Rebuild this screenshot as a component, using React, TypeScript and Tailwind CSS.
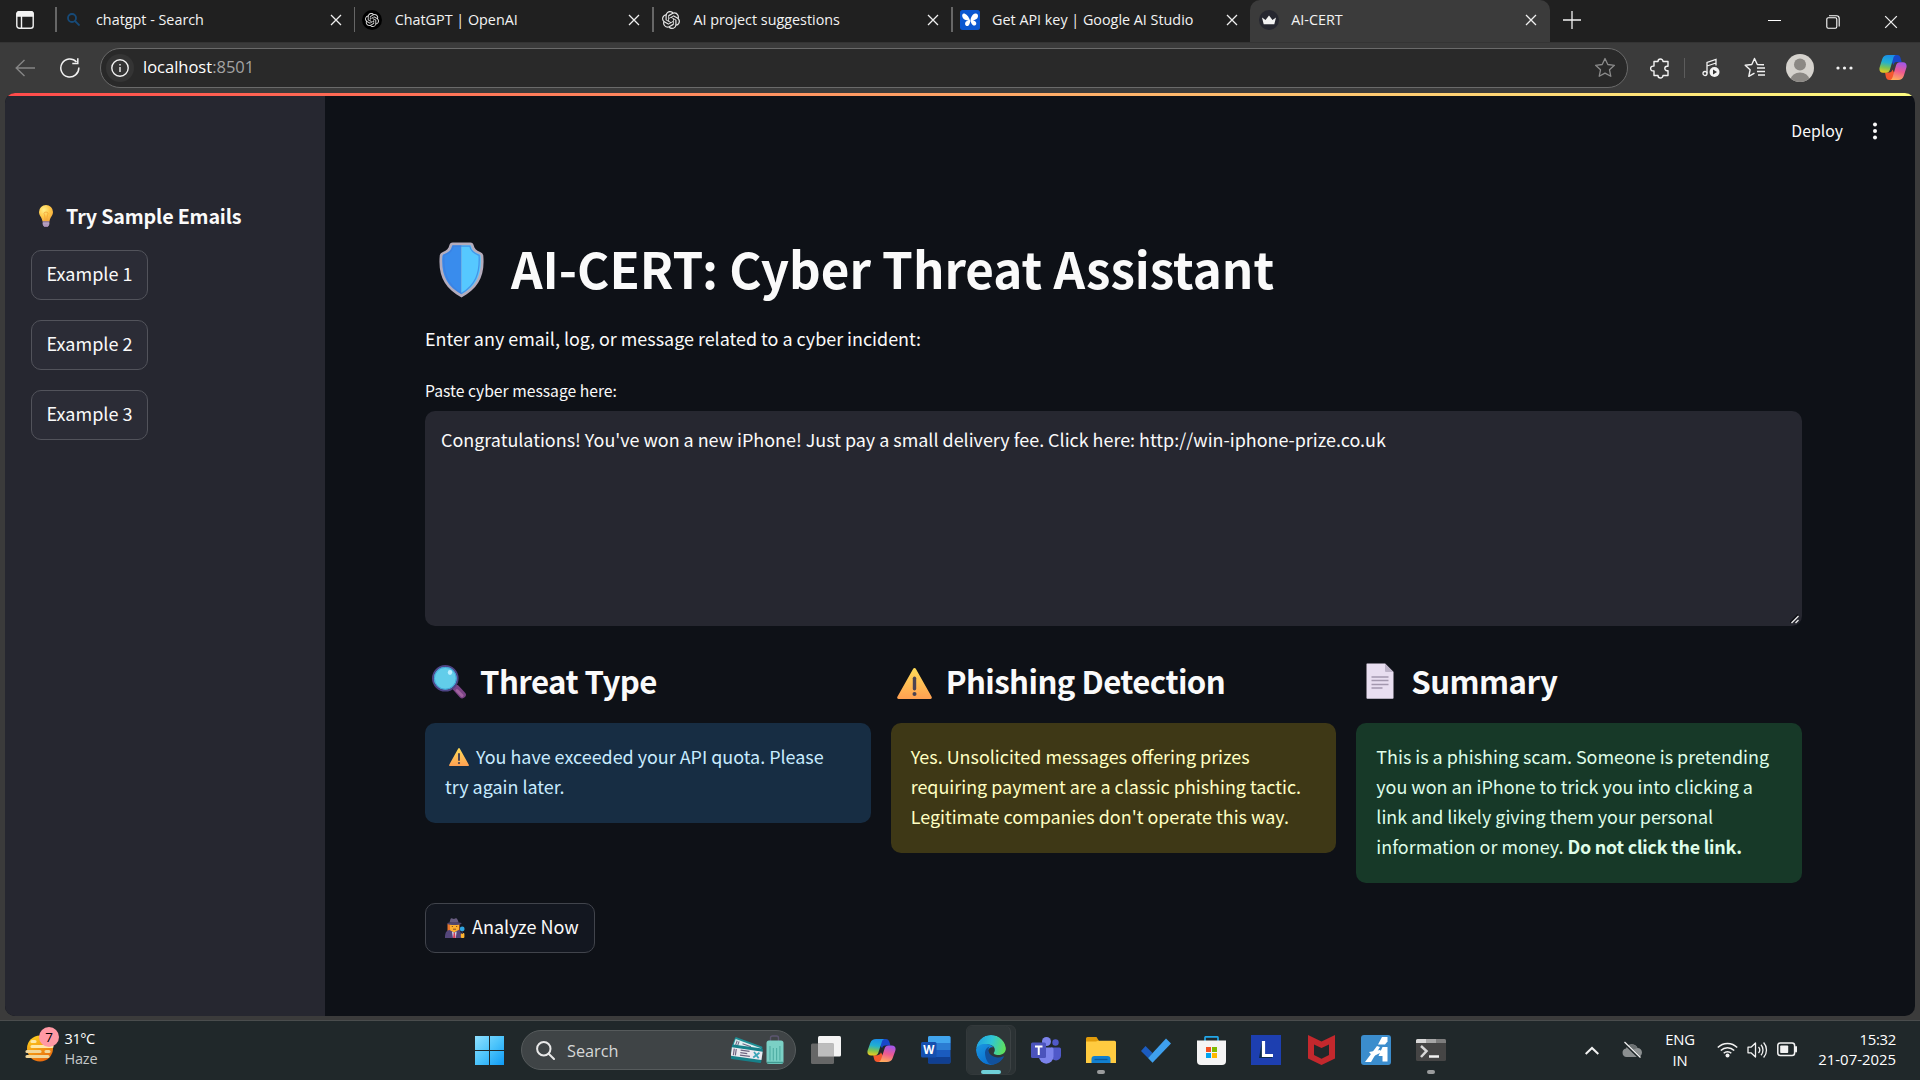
import React, { ReactNode } from "react";
import { SiOpenai } from "react-icons/si";

/* ---------- small glyphs ---------- */

const CloseX = ({ s = 12, w = 1.3 }: { s?: number; w?: number }) => (
  <svg width={s} height={s} viewBox="0 0 12 12" stroke="#f0f0f0" strokeWidth={w} fill="none">
    <path d="M1 1 11 11M11 1 1 11" />
  </svg>
);

const Copilot = ({ w, h, id }: { w: number; h: number; id: string }) => (
  <svg width={w} height={h} viewBox="0 0 30 27" preserveAspectRatio="none">
    <defs>
      <linearGradient id={id + "a"} x1="0.4" y1="0" x2="0.25" y2="1">
        <stop offset="0" stopColor="#1a8fe8" />
        <stop offset="0.4" stopColor="#22b0d0" />
        <stop offset="0.7" stopColor="#7cc353" />
        <stop offset="1" stopColor="#f2cb1d" />
      </linearGradient>
      <linearGradient id={id + "b"} x1="0.6" y1="0" x2="0.35" y2="1">
        <stop offset="0" stopColor="#a257e8" />
        <stop offset="0.5" stopColor="#ee5a90" />
        <stop offset="1" stopColor="#ffad5c" />
      </linearGradient>
    </defs>
    <path d="M13 1h6.5c2 0 3 1.2 3.6 3l1.2 4h-5.5c-2 0-2.6 1-3.2 3L13 7Z" fill="#1847c8" />
    <path d="M17 26h-6c-2 0-3-1.200-3.600-3l-1-4.500h4.500c2 0 3-1 3.500-3l2.800 5Z" fill="#f4582e" />
    <path d="M9.500 1H18c-1.600.5-2.200 1.600-2.700 3.200l-3.600 11.600c-.7 2-2 3-4 3H4.300C1.200 18.800-.2 16.500.7 13.200L3.500 5C4.500 2.200 6.300 1 9.500 1Z" fill={`url(#${id}a)`} />
    <path d="M20.500 26H12c1.600-.5 2.200-1.600 2.700-3.200l3.600-11.600c.7-2 2-3 4-3h3.400c3.100 0 4.500 2.300 3.600 5.600L26.500 22c-1 2.800-2.800 4-6 4Z" fill={`url(#${id}b)`} />
  </svg>
);

/* ---------- emoji drawings ---------- */

const Warning = ({ w, h, id }: { w: number; h: number; id: string }) => (
  <svg width={w} height={h} viewBox="0 0 35 31" preserveAspectRatio="none">
    <defs>
      <linearGradient id={id} x1="0" y1="0" x2="0" y2="1">
        <stop offset="0" stopColor="#ffdc58" />
        <stop offset="1" stopColor="#ffa052" />
      </linearGradient>
    </defs>
    <path d="M16.200.8a1.500 1.500 0 0 1 2.600 0L34.600 28.700A1.500 1.500 0 0 1 33.400 31H1.600A1.500 1.500 0 0 1 .4 28.700Z" fill={`url(#${id})`} />
    <rect x="15.800" y="8.500" width="3.400" height="14" rx="1.700" fill="#4b4352" />
    <circle cx="17.500" cy="26" r="2" fill="#4b4352" />
  </svg>
);

const Bulb = () => (
  <svg width="14" height="22" viewBox="0 0 14 22">
    <defs>
      <radialGradient id="bulb" cx="0.35" cy="0.3" r="0.8">
        <stop offset="0" stopColor="#fff08a" />
        <stop offset="0.5" stopColor="#ffc94a" />
        <stop offset="1" stopColor="#f3a63c" />
      </radialGradient>
    </defs>
    <path d="M7 0a7 7 0 0 1 7 7c0 4-3 5-3.500 9.500h-7C3 12 0 11 0 7a7 7 0 0 1 7-7Z" fill="url(#bulb)" />
    <path d="M5 8.200c0-1.500 4-1.500 4 0C9 9.600 7.900 10 7.900 15.500M5 8.200C5 9.600 6.100 10 6.100 15.500" stroke="#f19b33" strokeWidth=".7" fill="none" />
    <path d="M3.700 16.300h6.600v3.400L8.800 22H5.200l-1.500-2.300Z" fill="#9b82a8" />
    <path d="M3.700 18.200h6.600M4 20h6" stroke="#cdbad6" strokeWidth=".8" />
  </svg>
);

const Shield = () => (
  <svg width="46" height="56" viewBox="0 0 47 56">
    <path d="M14 0h18c2 0 3 1 3.500 3 .6 3 2.500 5 6.500 6.500 2 .8 3.300 2 3.300 4.500C47 34 40 47 23 56 6 47-1 34 .7 14c0-2.500 1.300-3.700 3.300-4.500C8 8 9.900 6 10.500 3 11 1 12 0 14 0Z" fill="#b4acbc" />
    <path d="M14.500 2.700H23v50C8 44.500 2.200 33 3.400 14.500c0-1.600.8-2.200 2.200-2.800 4.400-1.800 6.700-4 7.500-7.600.2-1 .6-1.400 1.400-1.400Z" fill="#398ced" />
    <path d="M31.500 2.700H23v50C38 44.500 43.800 33 42.600 14.500c0-1.600-.8-2.200-2.200-2.800-4.400-1.800-6.700-4-7.500-7.600-.2-1-.6-1.400-1.400-1.400Z" fill="#56c8ff" />
    <path d="M31.500 3.500h-17c-.5 4-3 7-9.500 9.500C4 32 9 43.500 23 52c14-8.500 19-20 18-39-6.500-2.500-9-5.500-9.500-9.500Z" fill="none" stroke="#3d7ede" strokeWidth="1.300" opacity=".7" />
  </svg>
);

const Magnifier = () => (
  <svg width="34" height="34" viewBox="0 0 34 34">
    <path d="m24.500 23.500 5.800 6.300" stroke="#7b4386" strokeWidth="7" strokeLinecap="round" />
    <path d="m25 25.500 5 5" stroke="#a0629f" strokeWidth="3" strokeLinecap="round" />
    <circle cx="13.300" cy="13.300" r="12.300" fill="#62cdea" stroke="#4d4586" strokeWidth="2" />
    <circle cx="13.300" cy="13.300" r="10.900" fill="none" stroke="#3fa6d6" strokeWidth="1" />
    <ellipse cx="18" cy="7.500" rx="2.200" ry="2.400" fill="#bdefff" />
  </svg>
);

const Page = () => (
  <svg width="28" height="36" viewBox="0 0 28 36">
    <path d="M1 .5h18L27.500 9v26a.8.8 0 0 1-.8.8H1.300a.8.800 0 0 1-.8-.8V1A.5.500 0 0 1 1 .5Z" fill="#e8def0" />
    <path d="M19 .5 27.500 9H20a1 1 0 0 1-1-1Z" fill="#bdb3c8" />
    <path d="M5.500 14h17M5.500 17.500h17M5.500 21.500h17M5.500 25h11" stroke="#a398ae" strokeWidth="1.300" />
  </svg>
);

const Detective = () => (
  <svg width="20" height="20" viewBox="0 0 20 20">
    <path d="M2.500 6h12v7a5 5 0 0 1-12 0Z" fill="#e8772e" />
    <path d="M5 6h9v4.500a4.500 4.500 0 0 1-9 0Z" fill="#ffb02e" />
    <path d="M0 20c0-5 1-7.500 4.500-8l4.500 2.500 4.500-2.500c2.500.5 2.500 3 2.500 8Z" fill="#54467a" />
    <path d="m7 13.500 2.300 1.500 2.300-1.500-.8 6.500H8Z" fill="#e6deee" />
    <path d="m8.600 15 1.400 0 .6 5H8Z" fill="#d23c5c" />
    <path d="M4.500 4.500 5.500 1c.2-.8 1-.9 1.700-.6L9 .9l1.600-.6c.7-.3 1.300 0 1.600.7l1.500 3.500Z" fill="#675c80" />
    <path d="M2 5.600c2-2 12.500-2 14.800 0-2 2-12.800 2-14.800 0Z" fill="#51466b" />
    <circle cx="17.200" cy="11" r="2.400" fill="#30a5e0" />
    <rect x="15.800" y="15" width="3.600" height="5" rx="1" fill="#ffb52e" />
    <path d="M17.200 13.500V16" stroke="#3b3350" strokeWidth="1.400" />
    <path d="M6.800 8.500h1.200M11 8.500h1.200M8 11.200h3" stroke="#6a3b20" strokeWidth=".8" />
  </svg>
);

/* ---------- browser chrome ---------- */

const Tab = ({ icon, title, active }: { icon: ReactNode; title: string; active?: boolean }) => (
  <div
    className={
      active
        ? "flex h-[44px] w-[300px] items-center rounded-t-[10px] bg-[#3b3b3b] pb-[5px] pr-[13px]"
        : "flex h-[41px] w-[298.700px] items-center pb-[2px] pr-[12px]"
    }
  >
    {!active && <div className="h-[25px] w-[1.500px] bg-[#666]" />}
    <div className={active ? "ml-[8px] flex w-[22px] justify-center" : "ml-[6px] flex w-[22px] justify-center"}>{icon}</div>
    <div className="ml-[11.500px] flex-1 whitespace-nowrap text-[14.350px] leading-[20px] text-[#f3f3f3]">{title}</div>
    <CloseX />
  </div>
);

const TabBar = () => (
  <div className="flex h-[42px] shrink-0 items-start bg-[#202020]">
    <div className="flex h-[40px] w-[55px] items-center pl-[16px]">
      <svg width="18" height="18" viewBox="0 0 18 18" fill="none" stroke="#f2f2f2" strokeWidth="1.400">
        <rect x=".8" y=".8" width="16.400" height="16.400" rx="2.500" />
        <path d="M1 2.200A2 2 0 0 1 3 .8h12a2 2 0 0 1 2 1.400V5H1Z" fill="#f2f2f2" />
        <path d="M5.500 5v12" />
      </svg>
    </div>
    <Tab
      title="chatgpt - Search"
      icon={
        <svg width="13" height="13" viewBox="0 0 13 13" fill="none" stroke="#174a78" strokeWidth="1.800">
          <circle cx="5" cy="5" r="4" />
          <path d="m8 8 4.500 4.500" />
        </svg>
      }
    />
    <Tab
      title="ChatGPT | OpenAI"
      icon={
        <div className="flex size-[20px] items-center justify-center rounded-full bg-black text-[#e0e0e0]">
          <SiOpenai size={14} />
        </div>
      }
    />
    <Tab title="AI project suggestions" icon={<SiOpenai size={18} color="#e6e6e6" />} />
    <Tab
      title="Get API key | Google AI Studio"
      icon={
        <svg width="20" height="20" viewBox="0 0 20 20">
          <rect width="20" height="20" rx="2.500" fill="#0b57d0" />
          <path d="M10.300 11C9.300 8 7.500 4.500 4.500 3.500 2.500 3 1.600 5 2.500 7.200c.9 2.200 3.500 3.200 6 3.300-2.500.3-3.700 2-3.400 3.700.3 1.700 2.300 2.400 3.500 1.200C9.800 14.300 10 12.500 10.300 11Z" fill="#fff" />
          <path d="M10.500 10.500c.3-3.500 2-6.500 4.800-7 2-.3 3.200 1.500 2.600 3.500-.7 2.200-2.700 3-5 3.300 2 .6 3.600 1.800 3.400 3.500-.2 1.700-2.200 2.400-3.600 1.200-1.400-1.200-2-3-2.200-4.500Z" fill="#fff" />
        </svg>
      }
    />
    <Tab
      active
      title="AI-CERT"
      icon={
        <svg width="20" height="20" viewBox="0 0 20 20">
          <circle cx="10" cy="10" r="10" fill="#262730" />
          <path d="M3 7.500 6.500 10 10 5.500l3.500 4.500L17 7.500 15.300 14.200H4.700Z" fill="#f2f2f2" />
        </svg>
      }
    />
    <div className="flex h-[40px] flex-1 items-center justify-between pl-[13px] pr-[22px]">
      <svg width="18" height="18" viewBox="0 0 18 18" stroke="#f2f2f2" strokeWidth="1.300">
        <path d="M9 0v18M0 9h18" />
      </svg>
      <div className="flex items-center">
        <div className="mr-[45px] h-px w-[13px] bg-white" />
        <svg className="mr-[44px] mt-[3px]" width="14" height="14" viewBox="0 0 14 14" fill="none" stroke="#fff" strokeWidth="1.100">
          <rect x=".8" y="2.800" width="10" height="10.400" rx="1.500" />
          <path d="M3 .8h7.500A2.700 2.700 0 0 1 13.200 3.500v8" />
        </svg>
        <div className="mt-[3px]"><CloseX s={14} w={1.1} /></div>
      </div>
    </div>
  </div>
);

const Toolbar = () => (
  <div className="flex h-[51px] shrink-0 items-center border-t border-[#343434] bg-[#3b3b3b] pb-[1px] pl-[15px] pr-[13px]">
    <svg width="20" height="18" viewBox="0 0 20 18" fill="none" stroke="#858585" strokeWidth="1.400">
      <path d="M9.500 1 1.200 9l8.300 8M1.200 9H20" />
    </svg>
    <svg className="ml-[24px]" width="22" height="22" viewBox="0 0 22 22" fill="none" stroke="#f2f2f2" strokeWidth="1.500">
      <path d="M19.800 10.500A9 9 0 1 1 17.500 5M13.300 6.500h5.500V1.200" />
    </svg>
    <div className="ml-[19px] flex h-[40px] w-[1528px] items-center rounded-full border border-[#6a6a6a] bg-[#292929] pl-[5px] pr-[11px]">
      <div className="flex size-[28px] items-center justify-center rounded-full bg-[#343434]">
        <svg width="18" height="18" viewBox="0 0 18 18" fill="none" stroke="#f2f2f2" strokeWidth="1.400">
          <circle cx="9" cy="9" r="8.200" />
          <path d="M9 8v5M9 5v1.500" />
        </svg>
      </div>
      <div className="ml-[9px] flex-1 pb-[1px] text-[16.500px] leading-[24px] text-white">
        localhost<span className="text-[#a3a3a3]">:8501</span>
      </div>
      <svg width="22" height="21" viewBox="0 0 22 21" fill="none" stroke="#8a8a8a" strokeWidth="1.300" strokeLinejoin="round">
        <path d="m11 1.500 2.800 6 6.600.8-4.900 4.500 1.300 6.500-5.800-3.200-5.800 3.200 1.300-6.500L1.600 8.300l6.600-.8Z" />
      </svg>
    </div>
    <svg className="ml-[22px]" width="20" height="22" viewBox="0 0 20 22" fill="none" stroke="#f2f2f2" strokeWidth="1.400" strokeLinejoin="round">
      <path d="M4 4.500h4a2.500 2.500 0 1 1 5 0h5v4.800h-1a2.200 2.200 0 1 0 0 4.400h1v4.800h-5a2.500 2.500 0 0 1-5 0H4v-4.600H3a2.400 2.400 0 0 1 0-4.800h1Z" />
    </svg>
    <div className="ml-[14px] h-[20px] w-px bg-[#5c5c5c]" />
    <svg className="ml-[17px]" width="18" height="20" viewBox="0 0 18 20" fill="none" stroke="#f2f2f2" strokeWidth="1.300">
      <circle cx="3" cy="15.500" r="2" />
      <path d="M5 15.500V4.500l9-3v6M5 8l9-3" />
      <circle cx="12.500" cy="14" r="5" fill="#f2f2f2" stroke="none" />
      <path d="m11 11.500 4 2.500-4 2.500Z" fill="#333" stroke="none" />
    </svg>
    <svg className="ml-[24px]" width="22" height="21" viewBox="0 0 22 21" fill="none" stroke="#f2f2f2" strokeWidth="1.400" strokeLinejoin="round">
      <path d="M20 7.700 13.300 7.500 10.500 1.500 7.800 7.500l-6.600.8 4.900 4.500-1.300 6.600 5.700-3.200M13 11h8M13 14.500h8M14 18h7" />
    </svg>
    <svg className="ml-[20px]" width="28" height="28" viewBox="0 0 28 28">
      <clipPath id="avatar"><circle cx="14" cy="14" r="14" /></clipPath>
      <g clipPath="url(#avatar)">
        <path d="M0 0h28v28H0Z" fill="#d5d2cd" />
        <circle cx="14" cy="10.500" r="6" fill="#8b8884" />
        <ellipse cx="14" cy="25" rx="9" ry="6.500" fill="#8b8884" />
      </g>
    </svg>
    <svg className="ml-[22px]" width="17" height="4" viewBox="0 0 17 4" fill="#f2f2f2">
      <circle cx="2" cy="2" r="1.600" /><circle cx="8.500" cy="2" r="1.600" /><circle cx="15" cy="2" r="1.600" />
    </svg>
    <div className="ml-auto"><Copilot w={28} h={27} id="tb" /></div>
  </div>
);

/* ---------- app page ---------- */

const SideButton = ({ children }: { children: ReactNode }) => (
  <button className="flex h-[50px] w-[117px] items-center justify-center rounded-[10px] border border-[#52535b] bg-[#2b2c36] pb-[5px] text-[18px] leading-[26px]">
    {children}
  </button>
);

const Column = ({ icon, title, box, children }: { icon: ReactNode; title: string; box: string; children: ReactNode }) => (
  <div className="min-w-0 flex-1">
    <div className="flex h-[60px] items-center">
      <div className="flex w-[55px]">{icon}</div>
      <h2 className="whitespace-nowrap text-[31.200px] font-bold leading-[44px] tracking-[-0.560px]">{title}</h2>
    </div>
    <div className={"mt-[12px] rounded-[10px] px-[20px] pb-[22px] pt-[18px] text-[17.930px] leading-[30px] " + box}>{children}</div>
  </div>
);

const AppPage = () => (
  <div className="flex h-[923px] shrink-0 flex-col bg-[#3b3b3b] pl-[5px] pr-[5px]">
    <div className="flex flex-1 flex-col overflow-hidden rounded-[10px] bg-[#0e1117] font-['Noto_Sans_CJK_SC',sans-serif] text-[#fafafa]">
      <div className="h-[3px] bg-[linear-gradient(90deg,#ff4b4b,#fffd80)]" />
      <div className="flex flex-1">
        <aside className="w-[320px] bg-[#262730] pl-[26px] pt-[104px]">
          <div className="flex h-[32px] items-center">
            <div className="ml-[8px] w-[27px]"><Bulb /></div>
            <h3 className="whitespace-nowrap text-[19.700px] font-bold leading-[32px] tracking-[-0.180px]">Try Sample Emails</h3>
          </div>
          <div className="mt-[18px] flex flex-col gap-[20px]">
            <SideButton>Example 1</SideButton>
            <SideButton>Example 2</SideButton>
            <SideButton>Example 3</SideButton>
          </div>
        </aside>
        <main className="flex flex-1 flex-col pl-[100px] pr-[113px]">
          <div className="-mr-[76px] flex h-[70px] items-center justify-end">
            <span className="mr-[29px] text-[15.800px] leading-[24px]">Deploy</span>
            <svg width="6" height="18" viewBox="0 0 6 18" fill="#fafafa">
              <circle cx="3" cy="2.500" r="2" /><circle cx="3" cy="9" r="2" /><circle cx="3" cy="15.500" r="2" />
            </svg>
          </div>
          <div className="mt-[66px] flex h-[72px] items-center">
            <div className="ml-[14px] w-[72px] pt-[3px]"><Shield /></div>
            <h1 className="whitespace-nowrap text-[49.300px] font-bold leading-[72px]">AI-CERT: Cyber Threat Assistant</h1>
          </div>
          <p className="mt-[19px] text-[17.930px] leading-[30px]">Enter any email, log, or message related to a cyber incident:</p>
          <label className="mt-[26px] text-[15.700px] leading-[24px]">Paste cyber message here:</label>
          <div className="mt-[8px] flex h-[215px] flex-col justify-between rounded-[10px] bg-[#262730] pl-[16px] pr-[2px] pb-[2px] pt-[13px]">
            <div className="text-[17.930px] leading-[30px]">
              Congratulations! You've won a new iPhone! Just pay a small delivery fee. Click here: http://win-iphone-prize.co.uk
            </div>
            <svg className="self-end" width="10" height="10" viewBox="0 0 10 10" strokeWidth="1.300">
              <path d="M0 8.500 8 .5" stroke="#0b0c10" />
              <path d="M1.500 9 8.500 2M5.500 9 8.500 6" stroke="#e8e8e8" />
            </svg>
          </div>
          <div className="mt-[25px] flex h-[252px] gap-[20px]">
            <Column icon={<div className="ml-[7px] mt-[2px]"><Magnifier /></div>} title="Threat Type" box="bg-[#172d43] text-[#c7ebff]">
              <span className="ml-[4px] mr-[7px] inline-flex h-[18px] translate-y-[2px]"><Warning w={20} h={18} id="w2" /></span>
              You have exceeded your API quota. Please try again later.
            </Column>
            <Column icon={<div className="ml-[6px] mt-[5px]"><Warning w={35} h={31} id="w1" /></div>} title="Phishing Detection" box="bg-[#3e3816] text-[#ffffc2]">
              Yes. Unsolicited messages offering prizes requiring payment are a classic phishing tactic. Legitimate companies don't operate this way.
            </Column>
            <Column icon={<div className="ml-[10px]"><Page /></div>} title="Summary" box="bg-[#173928] text-[#dffde9]">
              This is a phishing scam. Someone is pretending you won an iPhone to trick you into clicking a link and likely giving them your personal information or money.{" "}
              <strong className="font-bold tracking-[-0.240px]">Do not click the link.</strong>
            </Column>
          </div>
          <button className="flex h-[50px] w-[170px] items-center rounded-[10px] border border-[#41444c] bg-[#131720] pl-[19px]">
            <Detective />
            <span className="ml-[7px] whitespace-nowrap pb-[4px] text-[18px] leading-[26px]">Analyze Now</span>
          </button>
        </main>
      </div>
    </div>
  </div>
);

/* ---------- taskbar ---------- */

const Slot = ({ children, dot }: { children: ReactNode; dot?: boolean }) => (
  <div className="flex w-[55px] flex-col items-center pt-[10px]">
    <div className="flex h-[38px] items-center">{children}</div>
    {dot && <div className="mt-[1px] h-[4px] w-[8px] rounded-full bg-[#9a9c9d]" />}
  </div>
);

const Taskbar = () => (
  <div className="flex h-[64px] shrink-0 flex-col">
    <div className="h-[4px] bg-[#3b3b3b]" />
    <div className="flex h-[60px] border-t border-[#4a4d4d] bg-[#20282a] text-white">
      <div className="flex w-[475px] pl-[25px] pt-[6px]">
        <svg width="36" height="36" viewBox="0 0 36 36">
          <defs>
            <linearGradient id="sun" x1="0.2" y1="0" x2="0.7" y2="1">
              <stop offset="0" stopColor="#ffd21f" />
              <stop offset="1" stopColor="#e8650c" />
            </linearGradient>
          </defs>
          <circle cx="15" cy="21.500" r="13" fill="url(#sun)" />
          <g strokeLinecap="round" strokeWidth="3.200">
            <path d="M7 14.500h3M7 19.500h20" stroke="#ffe9a8" />
            <path d="M2 24.500h13M21 24.500h3M2 29.500h21" stroke="#f2d79a" />
          </g>
        </svg>
        <div className="-ml-[22px] flex size-[20px] items-center justify-center rounded-full bg-[#ff99a4] text-[13.500px] leading-[20px] text-black">7</div>
        <div className="ml-[5.500px] flex flex-col pt-[2px] text-[14.500px] leading-[20px]">
          <span className="tracking-[-0.400px]">31°C</span>
          <span className="tracking-[-0.200px] text-[#c4c7c8]">Haze</span>
        </div>
      </div>
      <svg className="mt-[15px]" width="29" height="29" viewBox="0 0 29 29">
        <defs>
          <linearGradient id="win" x1="0" y1="0" x2="1" y2="1">
            <stop offset="0" stopColor="#8fe0ff" />
            <stop offset="0.5" stopColor="#4cc4fb" />
            <stop offset="1" stopColor="#0f9bf5" />
          </linearGradient>
        </defs>
        <path d="M0 0h14v14H0ZM15 0h14v14H15ZM0 15h14v14H0ZM15 15h14v14H15Z" fill="url(#win)" />
      </svg>
      <div className="ml-[17px] mt-[9px] flex h-[40px] w-[275px] items-center rounded-full border border-[#565b5c] bg-[#3f4446] pl-[14px] pr-[11px]">
        <svg width="19" height="19" viewBox="0 0 19 19" fill="none" stroke="#e8e8e8" strokeWidth="2">
          <circle cx="7.800" cy="7.800" r="6.700" />
          <path d="m12.700 12.700 5.300 5.300" strokeLinecap="round" />
        </svg>
        <div className="ml-[12px] flex-1 pt-[1px] text-[16.300px] leading-[24px] text-[#d6d8d8]">Search</div>
        <svg width="53" height="30" viewBox="0 0 53 30">
          <g transform="translate(0 2) rotate(20 4 4)">
            <rect x="3" y="0" width="29" height="12" rx="1" fill="#1f8f96" />
            <rect x="4" y="2" width="27" height="8" fill="#dff1f2" />
            <path d="M6 3v6M8 3v6M12 4h9" stroke="#6e6480" strokeWidth="1.100" />
          </g>
          <g transform="rotate(8 2 12)">
            <rect x="1" y="9.500" width="31" height="14.500" rx="1" fill="#168089" />
            <rect x="1" y="12.500" width="31" height="8.500" fill="#eceaf0" />
            <path d="M3.500 13.500v6.500M5.500 13.500v6.500M10 14h9M10 16.500h7M10 19h10" stroke="#6e6480" strokeWidth="1.200" />
            <path d="m23.500 14 5.500 5.500M29 14l-5.500 5.500" stroke="#3aa6b8" strokeWidth="1.800" />
          </g>
          <path d="M39.500 6V3a2 2 0 0 1 2-2h4a2 2 0 0 1 2 2v3" fill="none" stroke="#5c5670" strokeWidth="1.400" />
          <rect x="35.500" y="5.500" width="17" height="23.500" rx="2.500" fill="#7bd0c5" />
          <path d="M39 11v14.500M42.300 13v12.500M45.600 13v12.500M48.900 11v14.500" stroke="#4fada3" strokeWidth="1.100" />
          <path d="M36 27.500h16" stroke="#3f9a91" strokeWidth="1.500" />
        </svg>
      </div>
      <div className="ml-[2.500px] flex">
        <Slot>
          <svg width="30" height="28" viewBox="0 0 30 28">
            <rect x="7" y="0" width="23" height="20.500" rx="1.500" fill="#f4f4f4" />
            <rect x="0" y="7.500" width="23" height="20.500" rx="1.500" fill="#6e6e6e" opacity=".9" />
            <rect x="7" y="7.500" width="16" height="13" fill="#bdbdbd" />
          </svg>
        </Slot>
        <Slot><Copilot w={29} h={25} id="tk" /></Slot>
        <Slot>
          <svg width="30" height="28" viewBox="0 0 30 28">
            <rect x="7" y="0" width="22.500" height="27.500" rx="1.500" fill="#1a5bbf" />
            <path d="M7 7V1.500A1.500 1.500 0 0 1 8.500 0H28a1.500 1.500 0 0 1 1.500 1.500V7Z" fill="#41a5ee" />
            <path d="M7 7h22.500v7H7Z" fill="#2b7cd3" />
            <path d="M7 21h22.500v5a1.500 1.500 0 0 1-1.500 1.500H8.500A1.500 1.500 0 0 1 7 26Z" fill="#103f91" />
            <rect x="0" y="6" width="15.500" height="15.500" rx="1.500" fill="#1550b0" />
            <text x="7.750" y="17.800" textAnchor="middle" fontFamily="Open Sans" fontWeight="700" fontSize="11.500" fill="#fff">W</text>
          </svg>
        </Slot>
        <div className="ml-[2.500px] mt-[4px] flex h-[50px] w-[50px] rounded-[6px] border border-[#33393b] bg-[#2b3234]">
          <div className="flex w-[44px] flex-col items-center rounded-[6px] border-r border-[#3c4244] bg-[#2f3638] pl-[5px] pt-[9px]">
            <svg width="30" height="30" viewBox="0 0 30 30">
              <defs>
                <linearGradient id="edgeA" x1="0" y1="0.300" x2="1" y2="0.500">
                  <stop offset="0" stopColor="#1f9fe0" />
                  <stop offset="0.500" stopColor="#2fc6d6" />
                  <stop offset="1" stopColor="#5fe05a" />
                </linearGradient>
                <linearGradient id="edgeB" x1="0" y1="0" x2="0.600" y2="1">
                  <stop offset="0" stopColor="#1b97e0" />
                  <stop offset="1" stopColor="#0a6fd0" />
                </linearGradient>
                <clipPath id="edgeC"><circle cx="15" cy="15" r="15" /></clipPath>
              </defs>
              <g clipPath="url(#edgeC)">
                <path d="M0 14C.5 6 7 0 15 0c8.500 0 15 6 15 13 0 4.500-3.500 7-7.500 7-3.500 0-5.500-1.200-4.500-2.500 2-2.500.5-8-6-8C6 9.500.5 12 0 14Z" fill="url(#edgeA)" />
                <path d="M0 14.500C1 10.500 5.500 8.500 10.500 9c3.500.3 6 1.800 7 3.500-3-.8-6 1.500-5.800 5.500C12 25 19 30 19 29.500 8 32 0 24 0 14.500Z" fill="url(#edgeB)" />
                <path d="M9 17.500c0-2.500 1.500-5 4.500-6-1.500 2-1.500 6 1.500 8.500 3.500 3 8.500 3 12.300 1.200.5-.2.800.2.600.6C25.500 26.500 21 30 16 30 11 29 9 22 9 17.500Z" fill="#12519c" />
              </g>
            </svg>
            <div className="mt-[5px] h-[4px] w-[20px] rounded-full bg-[#6fd0d8]" />
          </div>
        </div>
        <div className="w-[2.500px]" />
        <Slot>
          <svg width="30" height="27" viewBox="0 0 30 27">
            <circle cx="24.500" cy="5.500" r="3.200" fill="#5059c9" />
            <path d="M20 10.500h8.500A1.500 1.500 0 0 1 30 12v6.500a5 5 0 0 1-10 0Z" fill="#5059c9" />
            <circle cx="15.500" cy="4.500" r="4.500" fill="#7b83eb" />
            <path d="M8 10.500h13a1.500 1.500 0 0 1 1.500 1.500v7.500a7 7 0 0 1-14.500 0Z" fill="#7b83eb" />
            <rect x="0" y="5.500" width="15" height="15.500" rx="1.500" fill="#4b53bc" />
            <path d="M4 9.500h7.500M7.750 9.500V18" stroke="#fff" strokeWidth="2" />
          </svg>
        </Slot>
        <Slot dot>
          <svg width="30" height="27" viewBox="0 0 30 27">
            <path d="M0 1.500A1.500 1.500 0 0 1 1.500 0h9l2.500 4v8H0Z" fill="#e09b0b" />
            <path d="M0 4.500h10L12 3.800h16.500A1.500 1.500 0 0 1 30 5.300V26H0Z" fill="#ffcb40" />
            <path d="M5.500 26v-4a3 3 0 0 1 3-3h13a3 3 0 0 1 3 3v4Z" fill="#1280d0" />
            <path d="M8.500 22.500h13" stroke="#0b5a9c" strokeWidth="1.300" />
          </svg>
        </Slot>
        <Slot>
          <svg width="30" height="25" viewBox="0 0 30 25">
            <path d="m0 13 4.500-5 7 7-4.500 5Z" fill="#1b5cc0" />
            <path d="m7 20 4.500 4.700L30 5.500 25 .5Z" fill="#3ea0ee" />
          </svg>
        </Slot>
        <Slot>
          <svg width="29" height="29" viewBox="0 0 29 29">
            <path d="M8 6V1.500A.8.800 0 0 1 8.800.8h11.400a.8.800 0 0 1 .8.700V6" fill="none" stroke="#22a7e8" strokeWidth="1.700" />
            <path d="M0 4.500h29V25a4 4 0 0 1-4 4H4a4 4 0 0 1-4-4Z" fill="#f4f4f4" />
            <path d="M9 11h5v5H9Z" fill="#f25022" /><path d="M15 11h5v5h-5Z" fill="#7fba00" />
            <path d="M9 17h5v5H9Z" fill="#00a4ef" /><path d="M15 17h5v5h-5Z" fill="#ffb900" />
          </svg>
        </Slot>
        <Slot>
          <svg width="30" height="30" viewBox="0 0 30 30">
            <path d="M0 0h30v30H0Z" fill="#1d3fb0" />
            <path d="m11 6-3 17h13l1-2.500H11Z" fill="#0a2a4a" />
            <path d="M12.500 6v14.500h9.500" fill="none" stroke="#fff" strokeWidth="3.200" />
          </svg>
        </Slot>
        <Slot>
          <svg width="27" height="30" viewBox="0 0 27 30">
            <path d="M0 0 13.500 6.500 27 0v23.500L13.500 30 0 23.500Z" fill="#c3282d" />
            <path d="M6 9.500 13.500 13 21 9.500v10.500l-7.500 3.800L6 20Z" fill="#20282a" />
          </svg>
        </Slot>
        <Slot>
          <svg width="30" height="30" viewBox="0 0 30 30">
            <rect width="30" height="30" rx="3" fill="#3b8dcd" />
            <path d="M17 9.500 21 2h5.500v4.500L24 9.500Z" fill="#fff" />
            <path d="M21.500 12h5v14.500h-5V21l-4 0Z" fill="#fff" />
            <path d="m16 11 3 1-9 15H4Z" fill="#fff" />
            <path d="m8 17 11-2 2 2-9 4.500Z" fill="#fff" />
          </svg>
        </Slot>
        <Slot dot>
          <svg width="30" height="22" viewBox="0 0 30 22">
            <rect width="30" height="22" rx="1.500" fill="#454545" />
            <path d="M0 1.500A1.500 1.500 0 0 1 1.500 0H10v4H0Z" fill="#d8d8d8" />
            <path d="M10 0h10v4H10Z" fill="#a6a6a6" /><path d="M20 0h8.500A1.500 1.500 0 0 1 30 1.500V4H20Z" fill="#7d7d7d" />
            <path d="m5 7 5.500 5L5 18" fill="none" stroke="#d8d8d8" strokeWidth="2.500" />
            <path d="M13 17.500h10" stroke="#f2f2f2" strokeWidth="2.500" />
          </svg>
        </Slot>
      </div>
      <div className="ml-auto flex pr-[24px]">
        <svg className="mt-[25px]" width="14" height="9" viewBox="0 0 14 9" fill="none" stroke="#f2f2f2" strokeWidth="2"><path d="m.7 8 6.300-6 6.300 6" /></svg>
        <svg className="ml-[23px] mt-[20px]" width="20" height="18" viewBox="0 0 20 18">
          <path d="M4.500 16A4.300 4.300 0 0 1 4 7.500 6.200 6.200 0 0 1 15.500 7a4.500 4.500 0 0 1 0 9Z" fill="#8b8f90" />
          <path d="M6 5.500A6 6 0 0 1 15.500 7L10 9Z" fill="#6b7071" />
          <path d="M2 1.500 18 17" stroke="#20282a" strokeWidth="3" /><path d="M2.500 1 18.500 16.500" stroke="#f2f2f2" strokeWidth="1.300" />
        </svg>
        <div className="ml-[22px] flex w-[32px] flex-col items-center pt-[8px] text-[14.800px] leading-[20.500px] tracking-[-0.200px]"><span>ENG</span><span>IN</span></div>
        <svg className="ml-[21px] mt-[20px]" width="21" height="17" viewBox="0 0 21 17" fill="none" stroke="#f2f2f2" strokeWidth="1.500">
          <path d="M.8 6.500a13.500 13.500 0 0 1 19.400 0M3.800 9.500a9.400 9.400 0 0 1 13.400 0M6.700 12.300a5.400 5.400 0 0 1 7.600 0" />
          <circle cx="10.500" cy="14.500" r="2" fill="#f2f2f2" stroke="none" />
        </svg>
        <svg className="ml-[9px] mt-[20px]" width="21" height="18" viewBox="0 0 21 18" fill="none" stroke="#f2f2f2" strokeWidth="1.300" strokeLinejoin="round">
          <path d="M1 6.200h3L8.500 2v14L4 11.800H1ZM11.500 6a4.500 4.500 0 0 1 0 6M14 3.800a7.800 7.800 0 0 1 0 10.400M16.600 1.500a11.200 11.200 0 0 1 0 15" />
        </svg>
        <svg className="ml-[9px] mt-[21px]" width="21" height="15" viewBox="0 0 21 15">
          <rect x=".8" y="1" width="16.800" height="12.500" rx="2.500" fill="none" stroke="#f2f2f2" strokeWidth="1.500" />
          <rect x="3.200" y="3.500" width="8" height="7.500" rx=".8" fill="#f2f2f2" />
          <path d="M19 5v4.500" stroke="#f2f2f2" strokeWidth="2" strokeLinecap="round" />
        </svg>
        <div className="ml-[20px] flex w-[78px] flex-col items-end whitespace-nowrap pt-[8px] text-[14.900px] leading-[20px]">
          <span className="tracking-[-0.300px]">15:32</span><span>21-07-2025</span>
        </div>
      </div>
    </div>
  </div>
);

export default function App() {
  return (
    <div className="flex h-[1080px] w-[1920px] flex-col overflow-hidden bg-[#3b3b3b] font-['Open_Sans',sans-serif]">
      <TabBar />
      <Toolbar />
      <AppPage />
      <Taskbar />
    </div>
  );
}
